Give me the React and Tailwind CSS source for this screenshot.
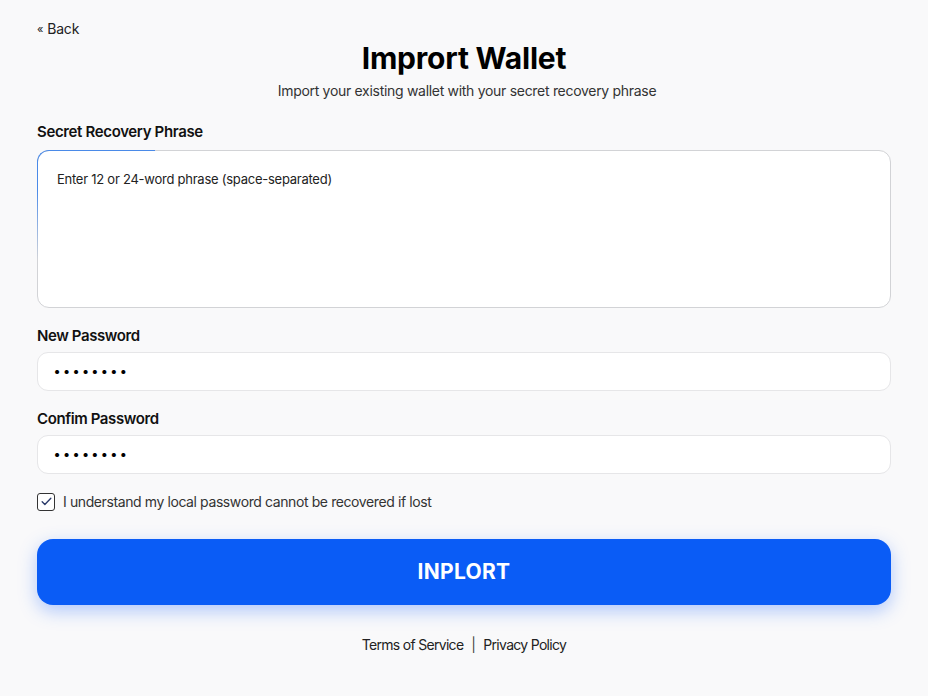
import React, { useState } from 'react'

function Field({ label, value }) {
  return (
    <div className="flex flex-col">
      <label className="text-[15px] font-semibold text-[#111] mb-[6px] leading-[20px] tracking-[-0.4px]">{label}</label>
      <div className="h-[39px] rounded-[11px] border border-[#e6e6e8] bg-white flex items-center px-[16px]">
        <span className="text-[13px] tracking-[3.3px] text-black font-bold">{value}</span>
      </div>
    </div>
  )
}

export default function App() {
  const [agree, setAgree] = useState(true)

  return (
    <div className="min-h-[696px] w-full bg-[#f9f9fa] text-[#1a1a1a]" style={{ fontFamily: 'Inter, "Liberation Sans", sans-serif' }}>
      <div className="px-[37px] pt-[20px]">
        <button className="text-[14px] text-[#222] flex items-center gap-[4px] leading-[18px] tracking-[-0.2px]">
          <span className="text-[11px]">«</span> Back
        </button>

        <h1 className="text-center text-[30px] font-bold text-black leading-[36px] mt-[2px] tracking-[-0.2px]">Imprort Wallet</h1>
        <p className="text-center text-[14px] text-[#333] mt-[5px] leading-[20px] pl-[6px] tracking-[-0.3px]">Import your existing wallet with your secret recovery phrase</p>

        <label className="block text-[15px] font-semibold text-[#111] mt-[21px] leading-[20px] tracking-[-0.35px]">Secret Recovery Phrase</label>
        <div className="relative mt-[8px] h-[158px] rounded-[12px] border border-[#d2d3d6] bg-white">
          <div className="absolute -left-px -top-px w-[118px] h-[40px] rounded-tl-[12px] border-t border-l border-[#4a8ae8]" />
          <div className="absolute -left-px top-[39px] w-px h-[70px] bg-gradient-to-b from-[#4a8ae8] to-[#d2d3d6]" />
          <p className="px-[19px] pt-[19px] text-[13px] text-[#222] leading-[18px] tracking-[-0.25px]">Enter 12 or 24-word phrase (space-separated)</p>
        </div>

        <div className="mt-[18px] flex flex-col gap-[18px]">
          <Field label="New Password" value="••••••••" />
          <Field label="Confim Password" value="••••••••" />
        </div>

        <div className="flex items-center gap-[8px] mt-[17px]">
          <button
            onClick={() => setAgree(!agree)}
            className="w-[18px] h-[18px] rounded-[3px] border-[1.5px] border-[#333] bg-white flex items-center justify-center"
          >
            {agree && (
              <svg width="13" height="13" viewBox="0 0 24 24" fill="none" stroke="#2a3a6a" strokeWidth="2.5" strokeLinecap="round" strokeLinejoin="round">
                <path d="M4 12.5l5 5L20 6" />
              </svg>
            )}
          </button>
          <span className="text-[14px] text-[#333] tracking-[-0.4px]">I understand my local password cannot be recovered if lost</span>
        </div>

        <button className="mt-[27px] w-full h-[66px] rounded-[16px] bg-[#0a5cf6] text-white text-[21px] font-bold tracking-[0.3px] shadow-[0_6px_18px_rgba(40,110,255,0.35)]">
          INPLORT
        </button>

        <div className="flex justify-center items-center gap-[8px] mt-[29px] text-[14px] text-[#222] tracking-[-0.7px]">
          <span>Terms of Service</span>
          <span className="text-[#444]">|</span>
          <span>Privacy Policy</span>
        </div>
      </div>
    </div>
  )
}
